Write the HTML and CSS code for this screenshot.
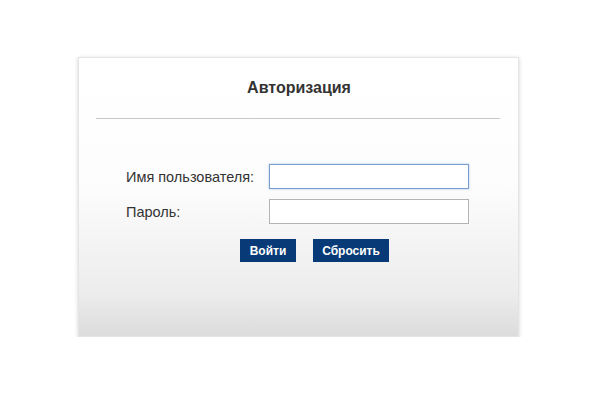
FILE: index.html
```html
<!DOCTYPE html>
<html lang="ru">
<head>
<meta charset="utf-8">
<title>Авторизация</title>
<link rel="stylesheet" href="styles.css">
</head>
<body>
<div class="panel">
  <div class="title">Авторизация</div>
  <div class="rule"></div>
  <form class="form">
    <div class="row">
      <label class="label">Имя пользователя:</label>
      <input class="field focus" type="text">
    </div>
    <div class="row">
      <label class="label">Пароль:</label>
      <input class="field" type="password">
    </div>
    <div class="buttons">
      <button type="button" class="btn btn-login">Войти</button>
      <button type="button" class="btn btn-reset">Сбросить</button>
    </div>
  </form>
</div>
</body>
</html>
```
FILE: styles.css
```css
html, body {
  margin: 0;
  padding: 0;
  background: #ffffff;
}
body {
  font-family: "Liberation Sans", Arial, sans-serif;
  color: #333333;
}
.panel {
  box-sizing: border-box;
  margin: 57px 0 0 78px;
  width: 441px;
  height: 280px;
  border: 1px solid #e4e4e4;
  background: linear-gradient(to bottom, #ffffff 0%, #fdfdfd 45%, #ececec 85%, #dcdcdc 100%);
  box-shadow: 0 1px 4px rgba(0,0,0,0.18);
  padding-top: 19px;
}
.title {
  text-align: center;
  font-size: 16px;
  font-weight: bold;
  line-height: 21px;
  color: #333333;
  padding-left: 1px;
}
.rule {
  height: 1px;
  background: #c8c8c8;
  margin: 20px 18px 0 17px;
}
.form {
  margin: 45px 0 0 47px;
}
.row {
  display: flex;
  align-items: center;
  margin-bottom: 10px;
}
.label {
  width: 143px;
  font-size: 14.5px;
  color: #333333;
}
.field {
  box-sizing: border-box;
  width: 200px;
  height: 25px;
  margin: 0;
  padding: 2px 4px;
  border: 1px solid #b4b4b4;
  background: #ffffff;
  outline: none;
}
.field.focus {
  border: 1px solid #7b9ed0;
  box-shadow: 0 0 2px rgba(80,130,200,0.5);
}
.buttons {
  display: flex;
  gap: 17px;
  margin: 15px 0 0 114px;
}
.btn {
  height: 23px;
  margin: 0;
  padding: 0 6px;
  border: none;
  background: #073a76;
  color: #ffffff;
  font-family: "Liberation Sans", Arial, sans-serif;
  font-size: 12px;
  font-weight: bold;
  cursor: pointer;
}
.btn-login { width: 56px; }
.btn-reset { width: 76px; }
```
